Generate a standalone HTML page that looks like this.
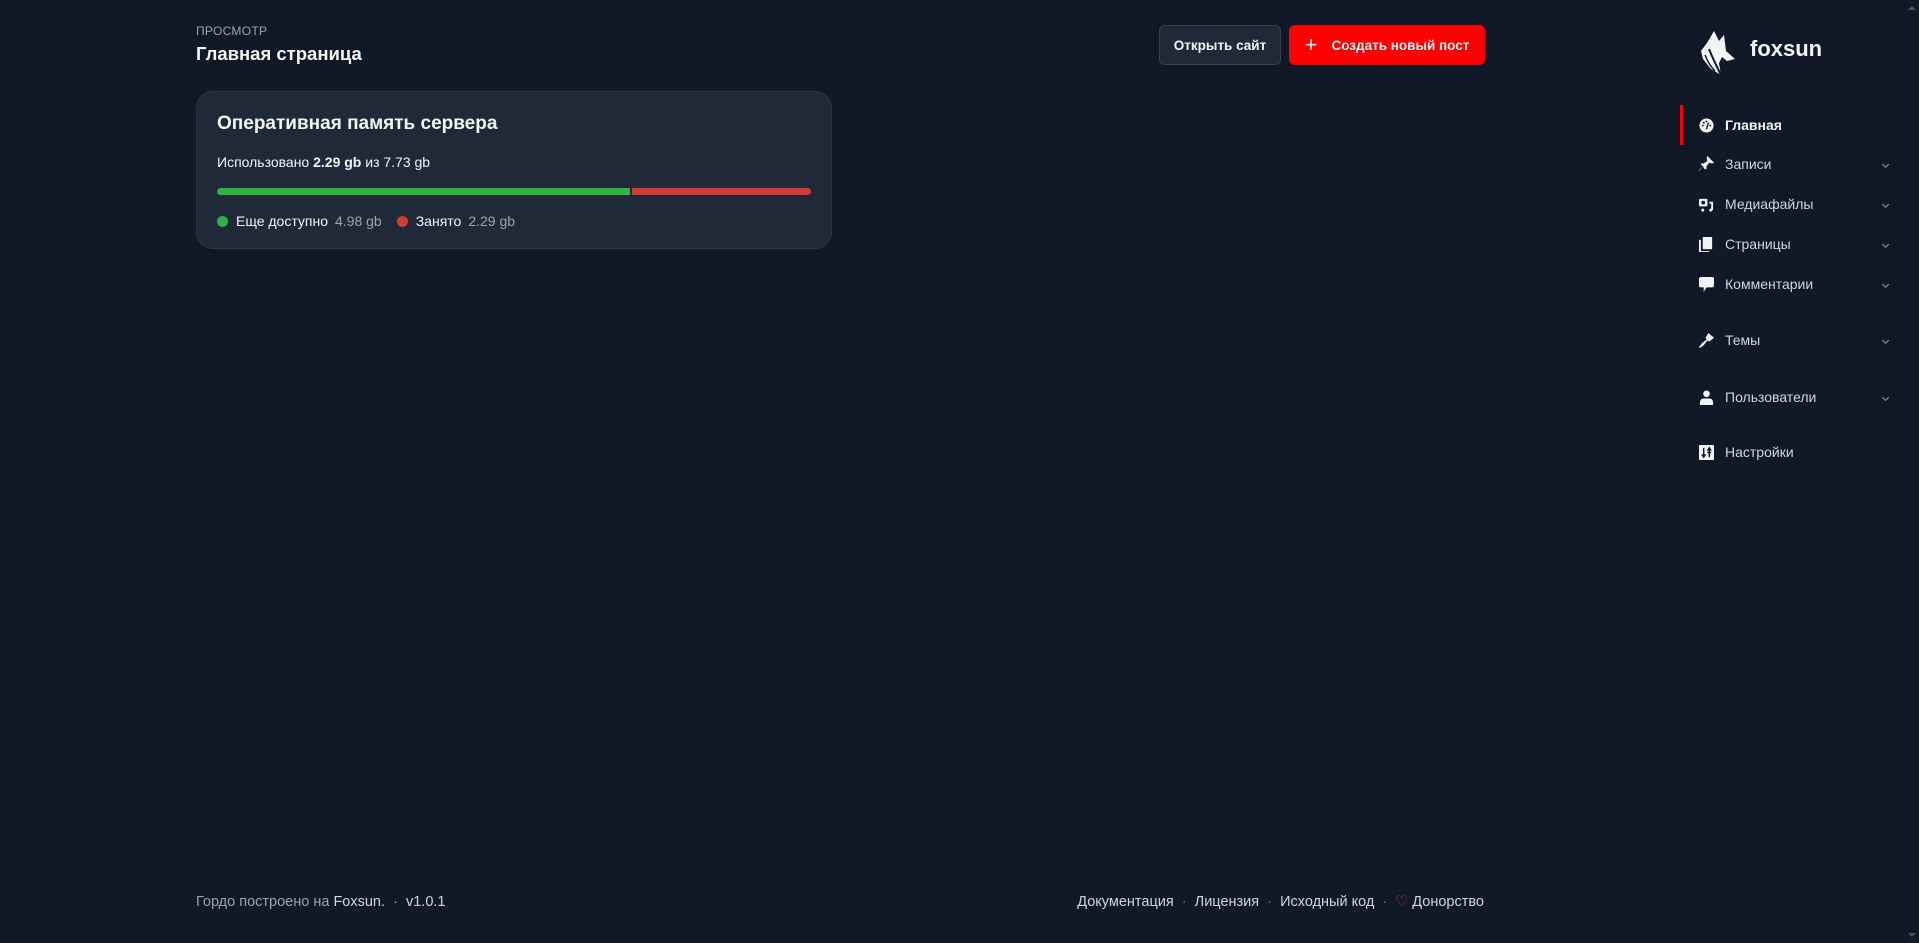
<!DOCTYPE html>
<html><head><meta charset="utf-8"><style>
*{box-sizing:border-box;margin:0;padding:0}
body{width:1919px;height:943px;background:#111827;font-family:"Liberation Sans",sans-serif;color:#e5e7eb;position:relative;overflow:hidden}
.abs{position:absolute}
.pre{left:196px;top:24px;font-size:12px;color:#9ca3af;letter-spacing:.3px}
.h1{left:196px;top:43px;font-size:18.5px;font-weight:bold;color:#f3f4f6}
.card{left:196px;top:91px;width:636px;height:158px;background:#1f2937;border:1px solid #2b3546;border-radius:17px}
.btn{top:25px;height:40px;border-radius:6px;font-size:13.5px;font-weight:bold;display:flex;align-items:center;justify-content:center;color:#f3f4f6}
.nav{left:1725px;font-size:14px;color:#d1d5db}
.ic{left:1699px;width:15px;height:15px}
.chev{left:1883px;width:5px;height:5px;border-right:1.2px solid #9ca3af;border-bottom:1.2px solid #9ca3af;transform:rotate(45deg)}
.foot{top:894px;font-size:14.5px;color:#9ca3af}
</style></head><body>
<div class="abs pre">ПРОСМОТР</div>
<div class="abs h1">Главная страница</div>
<div class="abs card">
 <div class="abs" style="left:20px;top:21px;font-size:19px;font-weight:bold;color:#f3f4f6">Оперативная память сервера</div>
 <div class="abs" style="left:20px;top:62px;font-size:14px;color:#f3f4f6">Использовано <b>2.29 gb</b> из 7.73 gb</div>
 <div class="abs" style="left:20px;top:96px;width:594px;height:7px;border-radius:4px;overflow:hidden;display:flex">
  <div style="width:413px;background:#2fb344"></div><div style="width:2px;background:#1f2937"></div><div style="flex:1;background:#d63939"></div></div>
 <div class="abs" style="left:20px;top:121px;font-size:14px;display:flex;align-items:center;gap:0">
  <span style="width:11px;height:11px;border-radius:50%;background:#2fb344;margin-right:8px"></span><span style="color:#f3f4f6">Еще доступно</span><span style="color:#9ca3af;margin-left:7px">4.98 gb</span>
  <span style="width:11px;height:11px;border-radius:50%;background:#d63939;margin:0 8px 0 15px"></span><span style="color:#f3f4f6">Занято</span><span style="color:#9ca3af;margin-left:7px">2.29 gb</span>
 </div>
</div>
<div class="abs btn" style="left:1159px;width:122px;background:#1f2937;border:1px solid #374151">Открыть сайт</div>
<div class="abs btn" style="left:1289px;width:196px;background:#ff0000"><span style="font-size:22px;font-weight:normal;margin-right:14px;line-height:1">+</span>Создать новый пост</div>

<svg class="abs" style="left:1697px;top:29px" width="42" height="48" viewBox="0 0 42 48"><path d="M17 2 L22 12 L27 6 L29 22 L38 30 L30 32 L25 28 L22 34 L24 46 L14 40 L6 30 L4 22 L10 14 Z" fill="#f3f4f6"/><path d="M12 20 Q16 30 24 46" stroke="#111827" stroke-width="2" fill="none"/><path d="M8 26 Q12 36 18 42" stroke="#111827" stroke-width="1.5" fill="none"/></svg>
<div class="abs" style="left:1750px;top:36px;font-size:22px;font-weight:bold;color:#f3f4f6">foxsun</div>

<div class="abs" style="left:1680px;top:105px;width:3px;height:40px;background:#ff0000"></div>
<svg class="abs ic" style="top:118px" viewBox="0 0 16 16"><circle cx="8" cy="8" r="7.5" fill="#f3f4f6"/><circle cx="4" cy="8" r="1" fill="#111827"/><circle cx="5" cy="5" r="1" fill="#111827"/><circle cx="8" cy="3.6" r="1" fill="#111827"/><circle cx="12" cy="8" r="1" fill="#111827"/><path d="M8 12 L10 5" stroke="#111827" stroke-width="1.5"/></svg>
<div class="abs nav" style="top:117px;color:#f3f4f6;font-weight:bold">Главная</div>
<svg class="abs ic" style="top:156px" viewBox="0 0 16 16"><path d="M9 0 L16 7 L14 8 L11 7 L8 11 L8 14 L6 14 L4 11 L0 16 L0 15 L4 11 L2 9 L2 8 L5 8 L9 5 L8 2 Z" fill="#f3f4f6"/></svg>
<div class="abs nav" style="top:156px">Записи</div><div class="abs chev" style="top:162px"></div>
<svg class="abs ic" style="top:197px" viewBox="0 0 16 16"><rect x="0" y="2" width="9" height="8" rx="1" fill="#f3f4f6"/><circle cx="4.5" cy="6" r="2" fill="#111827"/><circle cx="4" cy="14" r="1.6" fill="#f3f4f6"/><path d="M11 6h3v8" stroke="#f3f4f6" stroke-width="2" fill="none"/><circle cx="12.5" cy="14" r="1.6" fill="#f3f4f6"/></svg>
<div class="abs nav" style="top:196px">Медиафайлы</div><div class="abs chev" style="top:202px"></div>
<svg class="abs ic" style="top:237px" viewBox="0 0 16 16"><rect x="4" y="0" width="10" height="13" fill="#f3f4f6"/><path d="M1 3v13h10" stroke="#f3f4f6" stroke-width="2" fill="none"/></svg>
<div class="abs nav" style="top:236px">Страницы</div><div class="abs chev" style="top:242px"></div>
<svg class="abs ic" style="top:277px" viewBox="0 0 16 16"><path d="M2 0h12a2 2 0 0 1 2 2v7a2 2 0 0 1-2 2H8L5 16V11H2a2 2 0 0 1-2-2V2a2 2 0 0 1 2-2z" fill="#f3f4f6"/></svg>
<div class="abs nav" style="top:276px">Комментарии</div><div class="abs chev" style="top:282px"></div>
<svg class="abs ic" style="top:333px" viewBox="0 0 16 16"><path d="M10 0 L16 5 L11 9 L9 8 L5 13 L1 16 L0 15 L3 11 L8 7 L7 5 Z" fill="#f3f4f6"/></svg>
<div class="abs nav" style="top:332px">Темы</div><div class="abs chev" style="top:338px"></div>
<svg class="abs ic" style="top:390px" viewBox="0 0 16 16"><circle cx="8" cy="4" r="3.5" fill="#f3f4f6"/><path d="M1 16v-3a4 4 0 0 1 4-4h6a4 4 0 0 1 4 4v3z" fill="#f3f4f6"/></svg>
<div class="abs nav" style="top:389px">Пользователи</div><div class="abs chev" style="top:395px"></div>
<svg class="abs ic" style="top:445px" viewBox="0 0 16 16"><rect width="16" height="16" rx="1" fill="#f3f4f6"/><path d="M5 3v10M3 10l2 3 2-3M11 13V3M9 6l2-3 2 3M9 8h4" stroke="#111827" stroke-width="1.5" fill="none"/></svg>
<div class="abs nav" style="top:444px">Настройки</div>

<div class="abs foot" style="left:196px">Гордо построено на <span style="color:#d1d5db">Foxsun.</span> &nbsp;·&nbsp; <span style="color:#d1d5db">v1.0.1</span></div>
<div class="abs foot" style="right:435px;color:#d1d5db">Документация &nbsp;<span style="color:#6b7280">·</span>&nbsp; Лицензия &nbsp;<span style="color:#6b7280">·</span>&nbsp; Исходный код &nbsp;<span style="color:#6b7280">·</span>&nbsp; <span style="color:#d6336c">♡</span> Донорство</div>
<div class="abs" style="right:3px;top:2px;width:0;height:0;border:4px solid transparent;border-bottom-color:#4b5563"></div>
<div class="abs" style="right:3px;bottom:2px;width:0;height:0;border:4px solid transparent;border-top-color:#4b5563"></div>
</body></html>
